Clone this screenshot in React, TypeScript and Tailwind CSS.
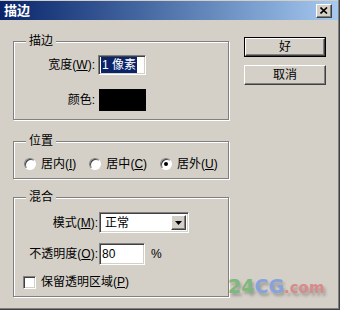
const font = "font-['Liberation_Sans','Noto_Sans_CJK_SC',sans-serif]"

const sunken =
  "border border-t-[#808080] border-l-[#808080] border-b-white border-r-white shadow-[inset_1px_1px_0_#404040,inset_-1px_-1px_0_#d4d0c8]"

const raised =
  "border border-t-white border-l-white border-b-[#404040] border-r-[#404040] shadow-[inset_-1px_-1px_0_#808080]"

function Key({ k }: { k: string }) {
  return <span className="underline underline-offset-[1px]">{k}</span>
}

function Group({
  title,
  className,
  children,
}: {
  title: string
  className?: string
  children: React.ReactNode
}) {
  return (
    <fieldset
      className={`border border-[#808080] shadow-[inset_1px_1px_0_#fff,1px_1px_0_#fff] ${className ?? ""}`}
    >
      <legend className="ml-[12px] px-[3px] bg-[#d4d0c8] text-[12px] leading-[14px]">
        {title}
      </legend>
      {children}
    </fieldset>
  )
}

function Radio({ checked, label, k }: { checked?: boolean; label: string; k: string }) {
  return (
    <div className="flex items-center gap-[5px]">
      <div className="w-[12px] h-[12px] rounded-full bg-white flex items-center justify-center border border-t-[#808080] border-l-[#808080] border-b-white border-r-white shadow-[inset_1px_1px_0_#404040]">
        {checked && <div className="w-[4px] h-[4px] rounded-full bg-black" />}
      </div>
      <span>
        {label}(<Key k={k} />)
      </span>
    </div>
  )
}

function Button({ label, primary }: { label: string; primary?: boolean }) {
  if (primary) {
    return (
      <div className="border border-black h-[20px] w-[82px]">
        <div className={`${raised} h-full w-full flex items-center justify-center`}>
          {label}
        </div>
      </div>
    )
  }
  return (
    <div className={`${raised} h-[20px] w-[82px] flex items-center justify-center`}>
      {label}
    </div>
  )
}

export default function App() {
  return (
    <div
      className={`${font} relative w-[340px] h-[310px] overflow-hidden bg-[#d4d0c8] text-[12px] leading-[14px] text-black shadow-[inset_-1px_-1px_0_#404040,inset_-2px_-2px_0_#808080]`}
    >
      <div className="h-[20px] pt-[1px] pr-[2px]">
        <div className="h-[19px] bg-linear-to-r from-[#0a246a] to-[#a6caf0] flex items-center justify-between pl-[4px] pr-[6px]">
          <span className="text-white font-bold text-[13px]">描边</span>
          <div className={`${raised} w-[16px] h-[14px] flex items-center justify-center bg-[#d4d0c8]`}>
            <svg width="8" height="7" viewBox="0 0 8 7">
              <path d="M0.5 0.5 L7 6.5 M7 0.5 L0.5 6.5" stroke="#000" strokeWidth="1.6" />
            </svg>
          </div>
        </div>
      </div>

      <div className="flex pl-[13px] pt-[14px]">
        <div className="w-[216px] flex flex-col">
          <Group title="描边" className="pb-[8px]">
            <div className="grid grid-cols-[81px_auto] gap-x-[3px] items-center mt-[7px]">
              <span className="text-right">
                宽度(<Key k="W" />):
              </span>
              <div className={`${sunken} w-[48px] h-[20px] bg-white flex items-center px-[2px]`}>
                <span className="bg-[#0a246a] text-white px-[1px] leading-[16px]">1 像素</span>
              </div>
              <span className="text-right mt-[14px]">颜色:</span>
              <div className="ml-[1px] mt-[14px] w-[47px] h-[22px] bg-black" />
            </div>
          </Group>

          <Group title="位置" className="mt-[14px] pb-[7px]">
            <div className="flex items-center gap-[13px] ml-[10px] mt-[9px] h-[14px]">
              <Radio label="居内" k="I" />
              <Radio label="居中" k="C" />
              <Radio checked label="居外" k="U" />
            </div>
          </Group>

          <Group title="混合" className="mt-[11px] pb-[7px]">
            <div className="grid grid-cols-[84px_auto] gap-x-[1px] items-center mt-[8px]">
              <span className="text-right">
                模式(<Key k="M" />):
              </span>
              <div className={`${sunken} w-[90px] h-[21px] bg-white flex items-center justify-between pl-[5px] pr-[2px]`}>
                <span>正常</span>
                <div className={`${raised} w-[15px] h-[15px] bg-[#d4d0c8] flex items-center justify-center`}>
                  <svg width="7" height="4" viewBox="0 0 7 4">
                    <path d="M0 0 H7 L3.5 4 Z" fill="#000" />
                  </svg>
                </div>
              </div>
              <span className="text-right mt-[10px]">
                不透明度(<Key k="O" />):
              </span>
              <div className="flex items-center mt-[10px]">
                <div className={`${sunken} w-[46px] h-[22px] bg-white flex items-center px-[2px]`}>
                  80
                </div>
                <span className="ml-[6px]">%</span>
              </div>
            </div>
            <div className="flex items-center gap-[5px] ml-[9px] mt-[10px]">
              <div className={`${sunken} w-[13px] h-[13px] bg-white`} />
              <span>
                保留透明区域(<Key k="P" />)
              </span>
            </div>
          </Group>
        </div>

        <div className="ml-[15px] mt-[3px] flex flex-col gap-[8px]">
          <Button primary label="好" />
          <Button label="取消" />
        </div>
      </div>

      <div className="absolute left-[228px] top-[279px] font-['DejaVu_Sans',sans-serif] font-bold flex items-baseline [text-shadow:2px_3px_3px_rgba(0,0,0,0.25)]">
        <span className="text-[19px] text-[#7db87d]">24</span>
        <span className="text-[19px] text-[#88a2dc]">CG</span>
        <span className="text-[15px] text-[#d98a8a]">.com</span>
      </div>
    </div>
  )
}
